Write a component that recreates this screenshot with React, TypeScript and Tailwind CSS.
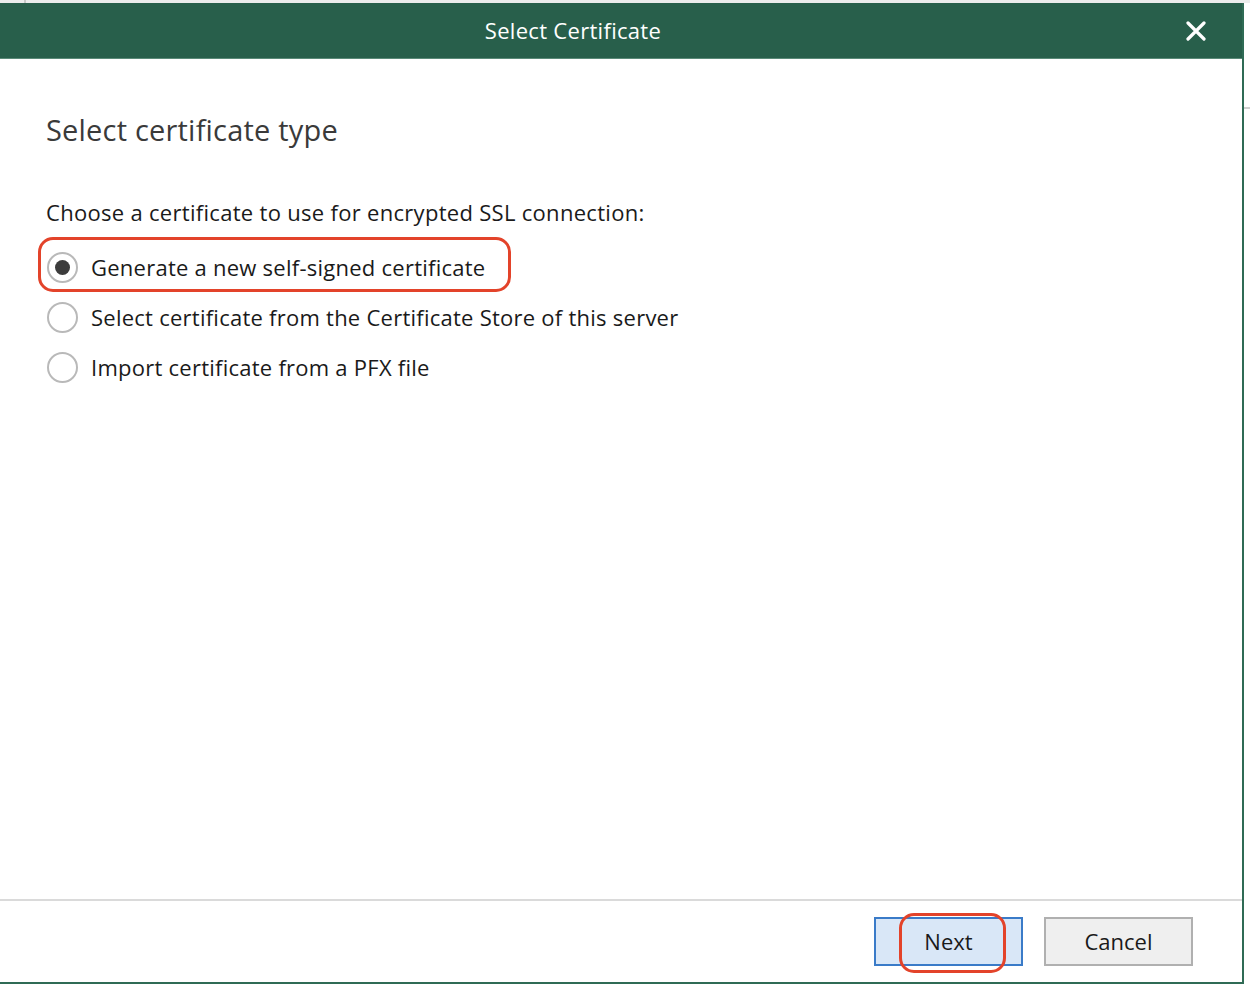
import React from "react";

const font = { fontFamily: '"Open Sans", "Noto Sans", sans-serif' };

function Radio({ checked }: { checked?: boolean }) {
  return (
    <div className="w-[31px] h-[31px] rounded-full border-2 border-[#b9b9b9] bg-white flex items-center justify-center shrink-0">
      {checked && <div className="w-[15px] h-[15px] rounded-full bg-[#3c3c3c]" />}
    </div>
  );
}

export default function App() {
  return (
    <div className="w-[1250px] h-[984px] bg-white relative overflow-hidden" style={font}>
      <div className="h-[3px] bg-[#ececec] relative">
        <div className="absolute left-[24px] top-0 w-[2px] h-[3px] bg-[#c8c8c8]" />
      </div>
      <div className="flex h-[981px]">
        <div className="w-[1244px] flex flex-col border-r-2 border-b-2 border-[#2f6b55]">
          <div className="h-[56px] bg-[#285f4b] border-b border-[#5a8a78] flex items-center relative shrink-0">
            <div className="flex-1 text-center text-white text-[22px] tracking-[0.3px] pr-[96px]">Select Certificate</div>
            <svg className="absolute left-[1186px] top-[18px]" width="20" height="20" viewBox="0 0 20 20">
              <path d="M2 2 L18 18 M18 2 L2 18" stroke="white" strokeWidth="3.2" strokeLinecap="round" />
            </svg>
          </div>
          <div className="flex-1 px-[46px] pt-[51px]">
            <div className="text-[29px] text-[#3a3a3a] leading-[40px] tracking-[0.2px]">Select certificate type</div>
            <div className="mt-[47px] text-[22px] text-[#1a1a1a] tracking-[0.3px] leading-[30px]">
              Choose a certificate to use for encrypted SSL connection:
            </div>
            <div className="mt-[15px] flex flex-col">
              <div className="relative flex items-center gap-[13px] h-[50px] pl-px">
                <Radio checked />
                <span className="text-[22px] text-[#1a1a1a] tracking-[0.25px]">Generate a new self-signed certificate</span>
                <div className="absolute left-[-8px] top-[-5px] w-[473px] h-[55px] rounded-[15px] border-[3px] border-[#e3432a]" />
              </div>
              <div className="flex items-center gap-[13px] h-[50px] pl-px">
                <Radio />
                <span className="text-[22px] text-[#1a1a1a] tracking-[0.25px]">Select certificate from the Certificate Store of this server</span>
              </div>
              <div className="flex items-center gap-[13px] h-[50px] pl-px">
                <Radio />
                <span className="text-[22px] text-[#1a1a1a] tracking-[0.25px]">Import certificate from a PFX file</span>
              </div>
            </div>
          </div>
          <div className="h-[2px] bg-[#dadada] shrink-0" />
          <div className="h-[81px] shrink-0 flex items-start justify-end pt-[16px] pr-[49px] gap-[21px]">
            <div className="relative w-[149px] h-[49px] bg-[#d9e7f7] border-2 border-[#3a7bc8] flex items-center justify-center text-[22px] text-[#1a1a1a]">
              Next
              <div className="absolute left-[23px] top-[-6px] w-[107px] h-[60px] rounded-[15px] border-[3px] border-[#e3432a]" />
            </div>
            <div className="w-[149px] h-[49px] bg-[#efefef] border-2 border-[#b0b0b0] flex items-center justify-center text-[22px] text-[#1a1a1a]">
              Cancel
            </div>
          </div>
        </div>
        <div className="flex-1 bg-white relative">
          <div className="absolute top-[104px] left-0 w-full h-[2px] bg-[#d0d0d0]" />
        </div>
      </div>
    </div>
  );
}
